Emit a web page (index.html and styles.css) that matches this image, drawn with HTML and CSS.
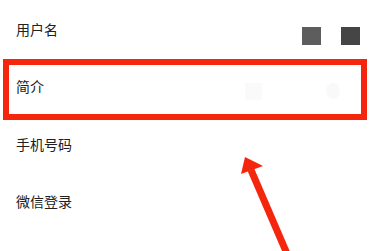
FILE: index.html
```html
<!DOCTYPE html>
<html lang="zh">
<head>
<meta charset="utf-8">
<link rel="stylesheet" href="styles.css">
</head>
<body>
<div class="screen">
  <ul class="list">
    <li class="row">
      <span class="label">用户名</span>
      <span class="thumbs">
        <span class="sq sq-a"></span>
        <span class="sq sq-b"></span>
      </span>
    </li>
    <li class="row">
      <span class="label">简介</span>
      <span class="thumbs faint">
        <span class="sq sq-f"></span>
        <span class="dot"></span>
      </span>
    </li>
    <li class="row"><span class="label">手机号码</span></li>
    <li class="row"><span class="label">微信登录</span></li>
  </ul>
  <div class="highlight"></div>
  <svg class="arrow" width="369" height="251" viewBox="0 0 369 251">
    <line x1="288" y1="256" x2="251" y2="170" stroke="#f4260e" stroke-width="7"/>
    <polygon points="245,157 241,174 263,166" fill="#f4260e"/>
  </svg>
</div>
</body>
</html>
```

FILE: styles.css
```css
html, body {
  margin: 0;
  padding: 0;
  background: #ffffff;
}
.screen {
  position: relative;
  width: 369px;
  height: 251px;
  overflow: hidden;
  font-family: "Noto Sans CJK SC", "Noto Sans", sans-serif;
}
.list {
  list-style: none;
  margin: 0;
  padding: 0;
}
.row {
  height: 57.5px;
  display: flex;
  align-items: center;
  justify-content: space-between;
  padding: 0 9px 0 16px;
  box-sizing: border-box;
}
.label {
  font-size: 14px;
  color: #202020;
  line-height: 1;
}
.thumbs {
  display: flex;
  align-items: center;
  gap: 20px;
  margin-top: 14px;
}
.sq {
  display: block;
  width: 19px;
  height: 18px;
}
.sq-a { background: #5d5d5d; }
.sq-b { background: #454545; }
.faint { gap: 64px; margin-right: 20px; margin-top: 10px; }
.sq-f { background: #fafafa; width: 17px; height: 17px; }
.dot {
  display: block;
  width: 14px;
  height: 16px;
  border-radius: 50%;
  background: #f9f9f9;
}
.highlight {
  position: absolute;
  left: 3px;
  top: 59px;
  width: 364px;
  height: 61px;
  border: 6px solid #f4260e;
  box-sizing: border-box;
}
.arrow {
  position: absolute;
  left: 0;
  top: 0;
}
```
